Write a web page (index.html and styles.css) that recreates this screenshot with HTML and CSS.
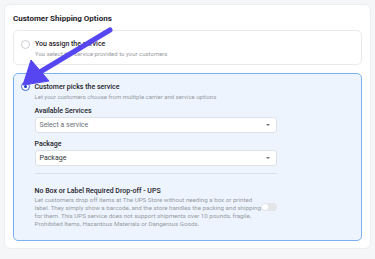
FILE: index.html
```html
<!DOCTYPE html>
<html lang="en">
<head>
    <meta charset="UTF-8">
    <meta name="viewport" content="width=device-width, initial-scale=1.0">
    <title>Customer Shipping Options</title>
    <link rel="stylesheet" href="styles.css">
</head>
<body>
    <div class="card">
        <h2 class="card-title">Customer Shipping Options</h2>

        <div class="option">
            <span class="radio"></span>
            <div class="option-body">
                <p class="option-title">You assign the service</p>
                <p class="option-sub">You select the service provided to your customers</p>
            </div>
        </div>

        <div class="option selected">
            <span class="radio checked"></span>
            <div class="option-body">
                <p class="option-title">Customer picks the service</p>
                <p class="option-sub">Let your customers choose from multiple carrier and service options</p>

                <div class="form-area">
                    <label class="field-label">Available Services</label>
                    <div class="select placeholder">Select a service<span class="caret"></span></div>

                    <label class="field-label">Package</label>
                    <div class="select">Package<span class="caret"></span></div>

                    <hr class="divider">

                    <div class="dropoff">
                        <div class="dropoff-text">
                            <p class="dropoff-title">No Box or Label Required Drop-off - UPS</p>
                            <p class="dropoff-desc">Let customers drop off items at The UPS Store without needing a box or printed<br>label. They simply show a barcode, and the store handles the packing and shipping<br>for them. This UPS service does not support shipments over 10 pounds, fragile,<br>Prohibited Items, Hazardous Materials or Dangerous Goods.</p>
                        </div>
                        <span class="toggle"><span class="knob"></span></span>
                    </div>
                </div>
            </div>
        </div>
    </div>

    <!-- pointer arrow over the radio -->
    <svg class="arrow" width="375" height="259" viewBox="0 0 375 259">
        <line x1="110" y1="30" x2="35" y2="75" stroke="#5546f2" stroke-width="5" stroke-linecap="round"/>
        <polygon points="23,85 31,60 49,81" fill="#5546f2" stroke="#5546f2" stroke-width="1" stroke-linejoin="round"/>
    </svg>
</body>
</html>
```

FILE: styles.css
```css
* {
    box-sizing: border-box;
}
body {
    margin: 0;
    padding: 4px;
    background-color: #f5f6f8;
    font-family: Roboto, "Liberation Sans", sans-serif;
    color: #1f2329;
}
p {
    margin: 0;
}
.card {
    background: white;
    border: 1px solid #eceef1;
    border-radius: 6px;
    padding: 8px 8px 0 8px;
    height: 245px;
}
.card-title {
    font-size: 8px;
    font-weight: 700;
    margin: 0 0 5px 0;
    line-height: 12px;
}
.option {
    display: flex;
    gap: 5px;
    border: 1px solid #e8eaed;
    border-radius: 5px;
    padding: 8px 7px 6px 7px;
    margin-bottom: 8px;
    height: 35px;
}
.option.selected {
    background: #edf4fe;
    border: 1.5px solid #7eb0f4;
    padding: 7.5px 6.5px 0 6.5px;
    height: 168px;
}
.option-body {
    min-width: 0;
}
.radio {
    flex: none;
    width: 9px;
    height: 9px;
    border: 1px solid #c9ccd1;
    border-radius: 50%;
    background: white;
    margin-top: 0.5px;
    position: relative;
}
.radio.checked {
    border-color: #3b62e8;
}
.radio.checked::after {
    content: "";
    position: absolute;
    left: 2px;
    top: 2px;
    width: 3px;
    height: 3px;
    border-radius: 50%;
    background: #1437c9;
}
.option-title {
    font-size: 7px;
    line-height: 10px;
    font-weight: 500;
}
.option-sub {
    font-size: 6px;
    line-height: 9px;
    color: #979ba2;
}
.form-area {
    width: 242px;
    margin-top: 6.5px;
}
.field-label {
    display: block;
    font-size: 7px;
    font-weight: 500;
    line-height: 9px;
}
.select {
    position: relative;
    width: 100%;
    height: 16px;
    line-height: 14px;
    background: white;
    border: 1px solid #dfe2e6;
    border-radius: 3px;
    padding: 0 4px;
    font-size: 7px;
    color: #30343a;
    margin: 0.5px 0 7.5px 0;
}
.select.placeholder {
    color: #6b7078;
}
.caret {
    position: absolute;
    right: 6px;
    top: 6px;
    border-left: 2px solid transparent;
    border-right: 2px solid transparent;
    border-top: 2.5px solid #6c7178;
}
.divider {
    border: none;
    border-top: 1px solid #d9e0e8;
    margin: 4.5px 0 12px 0;
}
.dropoff {
    display: grid;
    grid-template-columns: 1fr 16px;
    align-items: center;
    column-gap: 4px;
}
.dropoff-text {
    min-width: 0;
    white-space: nowrap;
}
.dropoff-title {
    font-size: 7px;
    font-weight: 500;
    line-height: 10px;
}
.dropoff-desc {
    font-size: 6.2px;
    line-height: 8px;
    color: #979ba2;
}
.toggle {
    width: 16px;
    height: 8px;
    border-radius: 4px;
    background: #e3e5e8;
    position: relative;
}
.knob {
    position: absolute;
    left: 1px;
    top: 1px;
    width: 6px;
    height: 6px;
    border-radius: 50%;
    background: white;
}
.arrow {
    position: absolute;
    left: 0;
    top: 0;
    pointer-events: none;
}
```
